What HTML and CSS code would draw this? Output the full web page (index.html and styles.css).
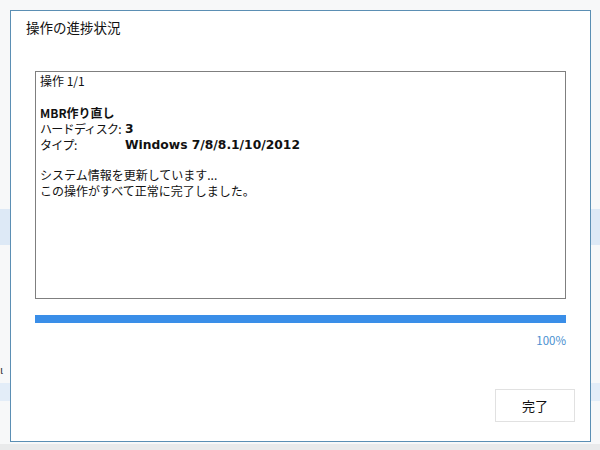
FILE: index.html
```html
<!DOCTYPE html>
<html lang="ja">
<head>
<meta charset="utf-8">
<link rel="stylesheet" href="styles.css">
</head>
<body>
<div class="backdrop">
  <div class="bg-row bg-top"></div>
  <div class="bg-row bg-band1"></div>
  <div class="bg-row bg-gap"><span class="bg-char">ι</span></div>
  <div class="bg-row bg-band2"></div>
  <div class="bg-row bg-rest"></div>
  <div class="bg-row bg-bottom"></div>
</div>
<div class="dialog">
  <div class="title">操作の進捗状況</div>
  <div class="content">
    <div class="log">
      <div class="line">操作 1/1</div>
      <div class="line blank"></div>
      <div class="line bold">MBR作り直し</div>
      <div class="line row"><span class="label">ハードディスク:</span><span class="value">3</span></div>
      <div class="line row"><span class="label">タイプ:</span><span class="value">Windows 7/8/8.1/10/2012</span></div>
      <div class="line blank gap"></div>
      <div class="line">システム情報を更新しています...</div>
      <div class="line">この操作がすべて正常に完了しました。</div>
    </div>
    <div class="progress"><div class="progress-fill" style="width:100%"></div></div>
    <div class="percent">100%</div>
    <div class="footer"><button class="btn">完了</button></div>
  </div>
</div>
</body>
</html>
```
FILE: styles.css
```css
* { box-sizing: border-box; }
html, body {
  margin: 0;
  padding: 0;
  width: 600px;
  height: 450px;
  overflow: hidden;
}
body {
  position: relative;
  background: #f6f7f8;
  font-family: "Noto Sans CJK JP", "Noto Sans", sans-serif;
  color: #111;
}
.backdrop {
  display: flex;
  flex-direction: column;
  width: 600px;
  height: 450px;
}
.bg-top { height: 209px; background: #f7f8f9; }
.bg-band1 { height: 36px; background: #dde9f6; }
.bg-gap { height: 138px; background: #f7f8f9; position: relative; }
.bg-char {
  position: absolute;
  left: 0;
  top: 117px;
  font-size: 11px;
  line-height: 14px;
  color: #333;
}
.bg-band2 { height: 18px; background: #e3edf8; }
.bg-rest { height: 43px; background: #f7f8f9; }
.bg-bottom { flex: 1; background: #e9eaeb; }

.dialog {
  position: absolute;
  left: 10px;
  top: 10px;
  width: 581px;
  height: 432px;
  background: #fff;
  border: 1px solid #5b8fb4;
  display: flex;
  flex-direction: column;
}
.title {
  padding: 6px 0 0 15px;
  font-size: 13.5px;
  line-height: 20px;
  color: #111;
}
.content {
  padding: 34px 24px 0 24px;
  display: flex;
  flex-direction: column;
}
.log {
  height: 228px;
  border: 1px solid #7f7f7f;
  padding: 1px 4px;
  font-size: 12px;
  line-height: 16px;
}
.line { height: 16px; white-space: nowrap; }
.line.gap { height: 14px; }
.bold { font-weight: bold; }
.row { display: flex; }
.label { width: 85px; flex: none; letter-spacing: -0.7px; }
.value {
  font-family: "DejaVu Sans", sans-serif;
  font-weight: bold;
  font-size: 12.3px;
}
.progress {
  margin-top: 16px;
  height: 8px;
  background: #e6e6e6;
}
.progress-fill {
  height: 100%;
  background: #3a8ee8;
}
.percent {
  margin-top: 9px;
  text-align: right;
  font-size: 11.5px;
  line-height: 16px;
  color: #4a8fd0;
}
.footer {
  display: flex;
  justify-content: flex-end;
  margin-top: 41px;
  margin-right: -9px;
}
.btn {
  width: 80px;
  height: 33px;
  background: #fff;
  border: 1px solid #e1e1e1;
  font-family: "Noto Sans CJK JP", sans-serif;
  font-size: 13px;
  color: #111;
  padding: 0;
}
```
